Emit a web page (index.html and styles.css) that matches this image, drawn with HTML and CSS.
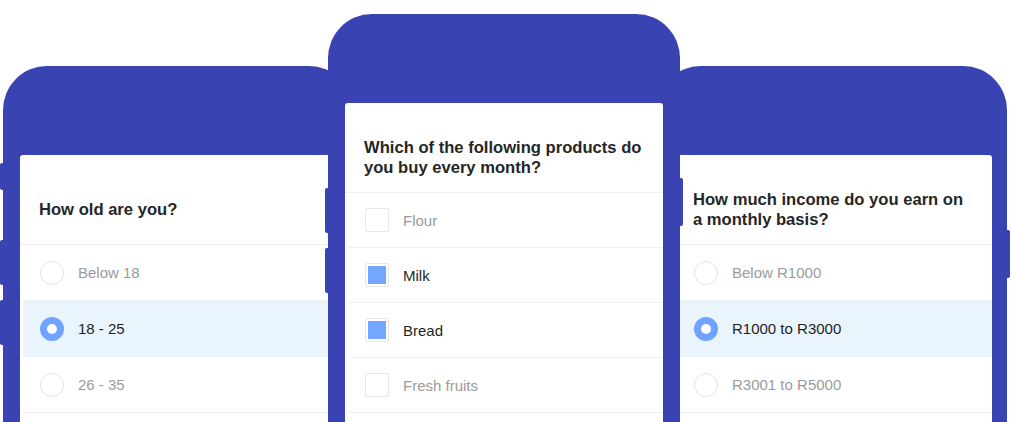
FILE: index.html
```html
<!DOCTYPE html>
<html lang="en">
  <head>
    <meta charset="UTF-8" />
    <meta name="viewport" content="width=device-width, initial-scale=1.0" />
    <title>survey phones</title>
    <link rel="stylesheet" href="styles.css">
  </head>
  <body>
    <div class="stage">
      <div class="phone phone-left">
        <span class="key key-mute"></span>
        <span class="key key-up"></span>
        <span class="key key-down"></span>
        <span class="key key-power"></span>
        <div class="screen">
          <div class="question">How old are you?</div>
          <ul class="options">
            <li class="option"><span class="radio"></span>Below 18</li>
            <li class="option selected"><span class="radio"></span>18 - 25</li>
            <li class="option"><span class="radio"></span>26 - 35</li>
          </ul>
        </div>
      </div>

      <div class="phone phone-middle">
        <span class="key key-mute"></span>
        <span class="key key-up"></span>
        <span class="key key-down"></span>
        <span class="key key-power"></span>
        <div class="screen">
          <div class="question">Which of the following products do you buy every month?</div>
          <ul class="options compact">
            <li class="option"><span class="check"></span>Flour</li>
            <li class="option checked"><span class="check"></span>Milk</li>
            <li class="option checked"><span class="check"></span>Bread</li>
            <li class="option"><span class="check"></span>Fresh fruits</li>
          </ul>
        </div>
      </div>

      <div class="phone phone-right">
        <span class="key key-mute"></span>
        <span class="key key-up"></span>
        <span class="key key-down"></span>
        <span class="key key-power"></span>
        <div class="screen">
          <div class="question">How much income do you earn on a monthly basis?</div>
          <ul class="options">
            <li class="option"><span class="radio"></span>Below R1000</li>
            <li class="option selected"><span class="radio"></span>R1000 to R3000</li>
            <li class="option"><span class="radio"></span>R3001 to R5000</li>
          </ul>
        </div>
      </div>
    </div>
  </body>
</html>
```

FILE: styles.css
```css
* {
  box-sizing: border-box;
  margin: 0;
  padding: 0;
}
body {
  background: #fff;
  font-family: "Liberation Sans", Arial, sans-serif;
  overflow: hidden;
}
.stage {
  display: flex;
  align-items: flex-start;
  height: 422px;
  padding-left: 3px;
  overflow: hidden;
}

/* phone bodies */
.phone {
  position: relative;
  flex: none;
  width: 350px;
  height: 420px;
  padding: 89px 17px 0;
  background: #3a43b2;
  border-radius: 44px 44px 0 0;
}
.phone-left {
  margin-top: 66px;
}
.phone-middle {
  width: 352px;
  margin-top: 14px;
  margin-left: -25px;
  z-index: 2;
}
.phone-right {
  margin-top: 66px;
  margin-left: -23px;
  padding-right: 15px;
}
.key {
  position: absolute;
  width: 3px;
  background: #3a43b2;
}
.key-mute,
.key-up,
.key-down {
  left: -3px;
  border-radius: 2px 0 0 2px;
}
.key-mute {
  top: 97px;
  height: 27px;
}
.key-up {
  top: 174px;
  height: 45px;
}
.key-down {
  top: 234px;
  height: 45px;
}
.key-power {
  right: -3px;
  top: 164px;
  height: 48px;
  border-radius: 0 2px 2px 0;
}

/* screen */
.screen {
  height: 100%;
  background: #fff;
  border-radius: 3px 3px 0 0;
}
.question {
  display: flex;
  align-items: center;
  height: 90px;
  padding: 21px 19px 0;
  border-bottom: 1px solid #eef1f4;
  color: #262626;
  font-size: 16.6px;
  font-weight: bold;
  line-height: 20px;
}
.options {
  list-style: none;
  margin-left: 3px;
}
.option {
  display: flex;
  align-items: center;
  gap: 14px;
  height: 56px;
  padding-left: 17px;
  border-bottom: 1px solid #eef1f4;
  color: #9b9b9b;
  font-size: 15px;
}
.compact .option {
  height: 55px;
}
.option.selected {
  background: #eaf4fd;
  border-bottom-color: #eaf4fd;
  color: #1f1f1f;
}
.option.checked {
  color: #1f1f1f;
}

/* controls */
.radio {
  flex: none;
  width: 24px;
  height: 24px;
  border: 1px solid #e2e2e2;
  border-radius: 50%;
  background: #fff;
}
.selected .radio {
  border: 7px solid #6fa3ff;
}
.check {
  flex: none;
  width: 24px;
  height: 24px;
  padding: 2px;
  border: 1px solid #e6e6e6;
  border-radius: 2px;
  background: #fff;
}
.checked .check::before {
  content: "";
  display: block;
  width: 100%;
  height: 100%;
  background: #72a6ff;
}
```
